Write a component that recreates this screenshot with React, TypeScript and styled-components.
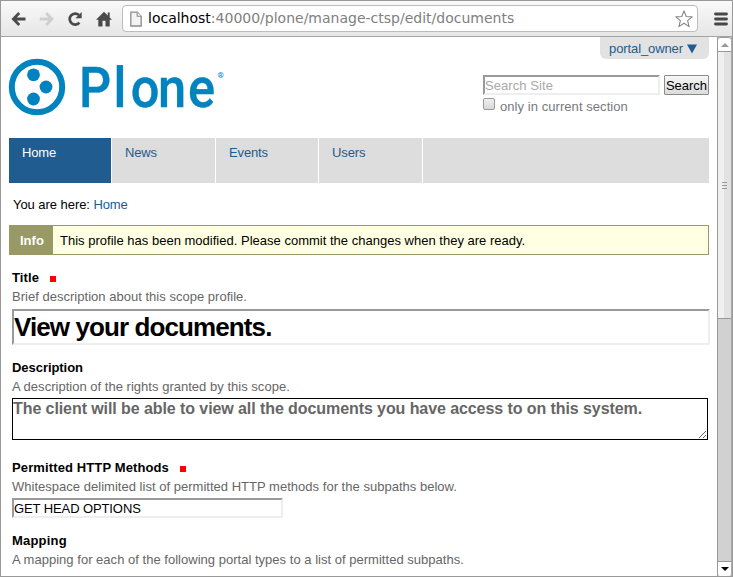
import React from 'react';
import styled, { createGlobalStyle } from 'styled-components';

const link = '#205c90';

const GlobalStyle = createGlobalStyle`
  * { box-sizing: border-box; }
  body { margin: 0; background: #fff; }
  input, textarea, button { font-family: inherit; margin: 0; outline: none; }
`;

const Window = styled.div`
  display: flex;
  flex-direction: column;
  width: 733px;
  height: 577px;
  border: 1px solid #999;
  overflow: hidden;
  background: #fff;
  color: #000;
  font: 13px/15px "Liberation Sans", Arial, sans-serif;
`;

const Toolbar = styled.header`
  display: flex;
  align-items: center;
  flex: none;
  height: 36px;
  padding: 0 4px 0 10px;
  border-bottom: 1px solid #a4a4a4;
  background: linear-gradient(#f9f9f9, #e6e6e6);
`;

const ToolIcon = styled.svg<{ $gap: number }>`
  flex: none;
  width: 16px;
  height: 16px;
  margin-right: ${p => p.$gap}px;
`;

const AddressBar = styled.div`
  display: flex;
  align-items: center;
  width: 576px;
  height: 27px;
  margin-right: 16px;
  padding: 0 4px 0 7px;
  border: 1px solid #bcbcbc;
  border-radius: 4px;
  background: #fff;
`;

const Url = styled.div`
  flex: 1;
  margin-left: 6px;
  padding-bottom: 1px;
  color: #808080;
  font: 14px/17px "DejaVu Sans", sans-serif;
  white-space: nowrap;
  b { color: #000; font-weight: normal; }
`;

const Viewport = styled.div`
  display: flex;
  flex: 1;
  min-height: 0;
`;

const Page = styled.main`
  flex: 1;
  padding: 0 8px;
  overflow: hidden;
`;

const Header = styled.div`
  display: flex;
  justify-content: space-between;
  height: 101px;
`;

const Logo = styled.svg`
  width: 220px;
  height: 60px;
  margin-top: 20px;
  overflow: visible;
`;

const Tools = styled.div`
  display: flex;
  flex-direction: column;
  width: 226px;
`;

const UserMenu = styled.a`
  align-self: flex-end;
  display: flex;
  align-items: center;
  justify-content: space-between;
  width: 109px;
  height: 22px;
  margin-bottom: 16px;
  padding: 0 12px 0 9px;
  border-radius: 0 0 6px 6px;
  background: #e2e2e2;
  color: ${link};
  letter-spacing: -0.1px;
  svg { margin-top: 2px; }
`;

const SearchRow = styled.div`
  display: flex;
  justify-content: space-between;
`;

const TextInput = styled.input<{ $width: number; $large?: boolean }>`
  display: block;
  width: ${p => p.$width}px;
  height: ${p => (p.$large ? 36 : 20)}px;
  padding: ${p => (p.$large ? 0 : 1)}px 0 0;
  border: 2px solid;
  border-color: #9a9a9a #eee #eee #9a9a9a;
  background: #fff;
  color: #000;
  font-size: ${p => (p.$large ? 26 : 13)}px;
  font-weight: ${p => (p.$large ? 'bold' : 'normal')};
  letter-spacing: ${p => (p.$large ? '-0.9px' : '-0.1px')};
  &::placeholder { color: #a9a9a9; letter-spacing: 0.07px; opacity: 1; }
`;

const SearchButton = styled.button`
  width: 45px;
  height: 20px;
  padding: 1px 0 0;
  border: 1px solid #8c8c8c;
  border-radius: 1px;
  background: linear-gradient(#f6f6f6, #dcdcdc);
  color: #000;
  font-size: 13px;
  line-height: 15px;
`;

const SectionOnly = styled.label`
  display: flex;
  gap: 5px;
  margin-top: 3px;
  color: #76797c;
  letter-spacing: 0.06px;
  span { padding-top: 1px; }
`;

const CheckBox = styled.i`
  width: 12px;
  height: 12px;
  border: 1px solid #9a9a9a;
  border-radius: 2px;
  background: linear-gradient(#f0f0f0, #d8d8d8);
`;

const Nav = styled.nav`
  display: flex;
  height: 45px;
  background: #ddd;
`;

const NavTab = styled.a<{ $active?: boolean; $width: number }>`
  width: ${p => p.$width}px;
  padding: 7px 13px;
  border-right: 1px solid #fff;
  background: ${p => (p.$active ? link : 'transparent')};
  color: ${p => (p.$active ? '#fff' : link)};
  letter-spacing: -0.13px;
`;

const Breadcrumbs = styled.div`
  margin: 14px 0 13px 4px;
  letter-spacing: -0.05px;
  a { color: ${link}; letter-spacing: -0.17px; }
`;

const Message = styled.div`
  display: flex;
  height: 30px;
  border: 1px solid #996;
  background: #ffffe3;
  line-height: 30px;
  strong { width: 43px; padding-left: 10px; margin-right: 7px; background: #996; color: #fff; }
  span { white-space: nowrap; letter-spacing: 0.01px; }
`;

const Form = styled.form`
  padding: 15px 0 0 3px;
`;

const Field = styled.div<{ $after: number }>`
  margin-bottom: ${p => p.$after}px;
`;

const Label = styled.label<{ $spacing: number }>`
  display: flex;
  align-items: center;
  height: 15px;
  font-weight: bold;
  letter-spacing: ${p => p.$spacing}px;
`;

const Required = styled.i`
  width: 6px;
  height: 6px;
  margin: 3px 0 0 11px;
  background: #f00;
`;

const Help = styled.p<{ $below?: number }>`
  margin: 4px 0 ${p => p.$below ?? 4}px;
  color: #666;
  letter-spacing: 0.02px;
  white-space: nowrap;
`;

const AreaWrap = styled.div`
  position: relative;
  width: 696px;
  height: 42px;
`;

const Area = styled.textarea`
  display: block;
  width: 100%;
  height: 100%;
  padding: 1px 0;
  border: 1px solid #000;
  resize: none;
  overflow: hidden;
  background: #fff;
  color: #666;
  font-size: 16px;
  font-weight: bold;
  line-height: 18px;
  letter-spacing: -0.08px;
`;

const ResizeGrip = styled.svg`
  position: absolute;
  right: 2px;
  bottom: 2px;
  width: 7px;
  height: 7px;
`;

const Scrollbar = styled.aside`
  display: flex;
  flex-direction: column;
  width: 15px;
  border-left: 1px solid #999;
  border-right: 1px solid #aaa;
  background: #d1d1d1;
`;

const ScrollButton = styled.div<{ $up?: boolean }>`
  display: flex;
  align-items: center;
  justify-content: center;
  height: 15px;
  border: 0 solid #999;
  border-width: ${p => (p.$up ? '1px 0' : '1px 0 0')};
  border-radius: ${p => (p.$up ? '3px 3px 0 0' : '0 0 3px 3px')};
  background: #fff;
`;

const Thumb = styled.div`
  display: flex;
  flex-direction: column;
  align-items: center;
  justify-content: center;
  gap: 2px;
  height: 267px;
  border-bottom: 1px solid #999;
  background: linear-gradient(90deg, #f0f0f0 50%, #e2e2e2 50%);
  i { width: 5px; height: 1px; background: #999; }
`;

const Filler = styled.div`
  flex: 1;
`;

const tabs = [
  { name: 'Home', width: 103 },
  { name: 'News', width: 104 },
  { name: 'Events', width: 103 },
  { name: 'Users', width: 104 },
];

export default function App() {
  return (
    <Window>
      <GlobalStyle />
      <Toolbar>
        <ToolIcon $gap={12} viewBox="0 0 16 16" fill="none" stroke="#4a4a4a" strokeWidth="2.8">
          <path d="M14.5 8H3M8.2 2 2.4 8l5.8 6" />
        </ToolIcon>
        <ToolIcon $gap={12} viewBox="0 0 16 16" fill="none" stroke="#cfcfcf" strokeWidth="2.8">
          <path d="M.8 8h11.5M7.1 2l5.8 6-5.8 6" />
        </ToolIcon>
        <ToolIcon $gap={13} viewBox="0 0 16 16">
          <path d="M12.4 11.6A5.5 5.5 0 1 1 11.9 4" fill="none" stroke="#4a4a4a" strokeWidth="2.7" />
          <path d="M14.7 1v6.3H8.4z" fill="#4a4a4a" />
        </ToolIcon>
        <ToolIcon $gap={10} viewBox="0 0 16 16" fill="#4a4a4a">
          <path d="M8 .8 0 8.7h2.3V15.5h4.2v-5.8h3v5.8h4.2V8.7H16l-2.3-2.3V1.5h-2v2.9z" />
        </ToolIcon>
        <AddressBar>
          <svg width="12" height="16" viewBox="0 0 12 16">
            <path d="M.8 1.2h6.4l4 4V15H.8z" fill="#f3f3f3" stroke="#8a8a8a" strokeWidth="1.3" />
            <path d="M7.2 1.2v4h4" fill="#fff" stroke="#8a8a8a" strokeWidth="1.1" />
          </svg>
          <Url><b>localhost</b>:40000/plone/manage-ctsp/edit/documents</Url>
          <svg width="18" height="18" viewBox="0 0 18 18">
            <path d="m9 .9 2.2 5.6 6 .4-4.6 3.8 1.5 5.9L9 13.3l-5.1 3.3 1.5-5.9L.8 6.9l6-.4z" fill="#fff" stroke="#858585" strokeWidth="1.1" strokeLinejoin="round" />
          </svg>
        </AddressBar>
        <svg width="14" height="14" viewBox="0 0 14 14">
          <path d="M1.5 2h11M1.5 7h11M1.5 12h11" stroke="#474747" strokeWidth="2.8" strokeLinecap="round" />
        </svg>
      </Toolbar>
      <Viewport>
        <Page>
          <Header>
            <Logo viewBox="0 0 220 60" fill="#0083be">
              <circle cx="28" cy="30" r="25.2" fill="none" stroke="#0083be" strokeWidth="6" />
              <circle cx="24.5" cy="17.8" r="6.4" />
              <circle cx="37" cy="30" r="6.4" />
              <circle cx="24.5" cy="42" r="6.4" />
              <text transform="scale(0.91 1)" x="76.8 114.8 133.7 163.7 196.8" y="49.6" fontFamily="Roboto" fontSize="55.5" fontWeight="500" stroke="#0083be" strokeWidth="0.4">Plone</text>
              <text x="208.5" y="21" fontFamily="Roboto" fontSize="8" fontWeight="700">®</text>
            </Logo>
            <Tools>
              <UserMenu>
                portal_owner
                <svg width="10" height="10" viewBox="0 0 10 10"><path d="M0 .5h10L5 9.5z" fill={link} /></svg>
              </UserMenu>
              <SearchRow>
                <TextInput $width={177} placeholder="Search Site" />
                <SearchButton type="button">Search</SearchButton>
              </SearchRow>
              <SectionOnly><CheckBox /><span>only in current section</span></SectionOnly>
            </Tools>
          </Header>
          <Nav>
            {tabs.map((t, i) => <NavTab key={t.name} $active={i === 0} $width={t.width}>{t.name}</NavTab>)}
          </Nav>
          <Breadcrumbs>You are here: <a>Home</a></Breadcrumbs>
          <Message>
            <strong>Info</strong>
            <span>This profile has been modified. Please commit the changes when they are ready.</span>
          </Message>
          <Form>
            <Field $after={15}>
              <Label $spacing={0.1}>Title<Required /></Label>
              <Help $below={5}>Brief description about this scope profile.</Help>
              <TextInput $width={698} $large defaultValue="View your documents." />
            </Field>
            <Field $after={20}>
              <Label $spacing={-0.05}>Description</Label>
              <Help>A description of the rights granted by this scope.</Help>
              <AreaWrap>
                <Area defaultValue="The client will be able to view all the documents you have access to on this system." />
                <ResizeGrip viewBox="0 0 7 7"><path d="M0 7 7 0M4 7l3-3" stroke="#666" /></ResizeGrip>
              </AreaWrap>
            </Field>
            <Field $after={15}>
              <Label $spacing={0.12}>Permitted HTTP Methods<Required /></Label>
              <Help>Whitespace delimited list of permitted HTTP methods for the subpaths below.</Help>
              <TextInput $width={271} defaultValue="GET HEAD OPTIONS" />
            </Field>
            <Field $after={0}>
              <Label $spacing={0.2}>Mapping</Label>
              <Help>A mapping for each of the following portal types to a list of permitted subpaths.</Help>
            </Field>
          </Form>
        </Page>
        <Scrollbar>
          <ScrollButton $up><svg width="8" height="4" viewBox="0 0 8 4"><path d="M4 0l4 4H0z" fill="#999" /></svg></ScrollButton>
          <Thumb><i /><i /><i /></Thumb>
          <Filler />
          <ScrollButton><svg width="8" height="4" viewBox="0 0 8 4"><path d="M0 0h8L4 4z" fill="#000" /></svg></ScrollButton>
        </Scrollbar>
      </Viewport>
    </Window>
  );
}
